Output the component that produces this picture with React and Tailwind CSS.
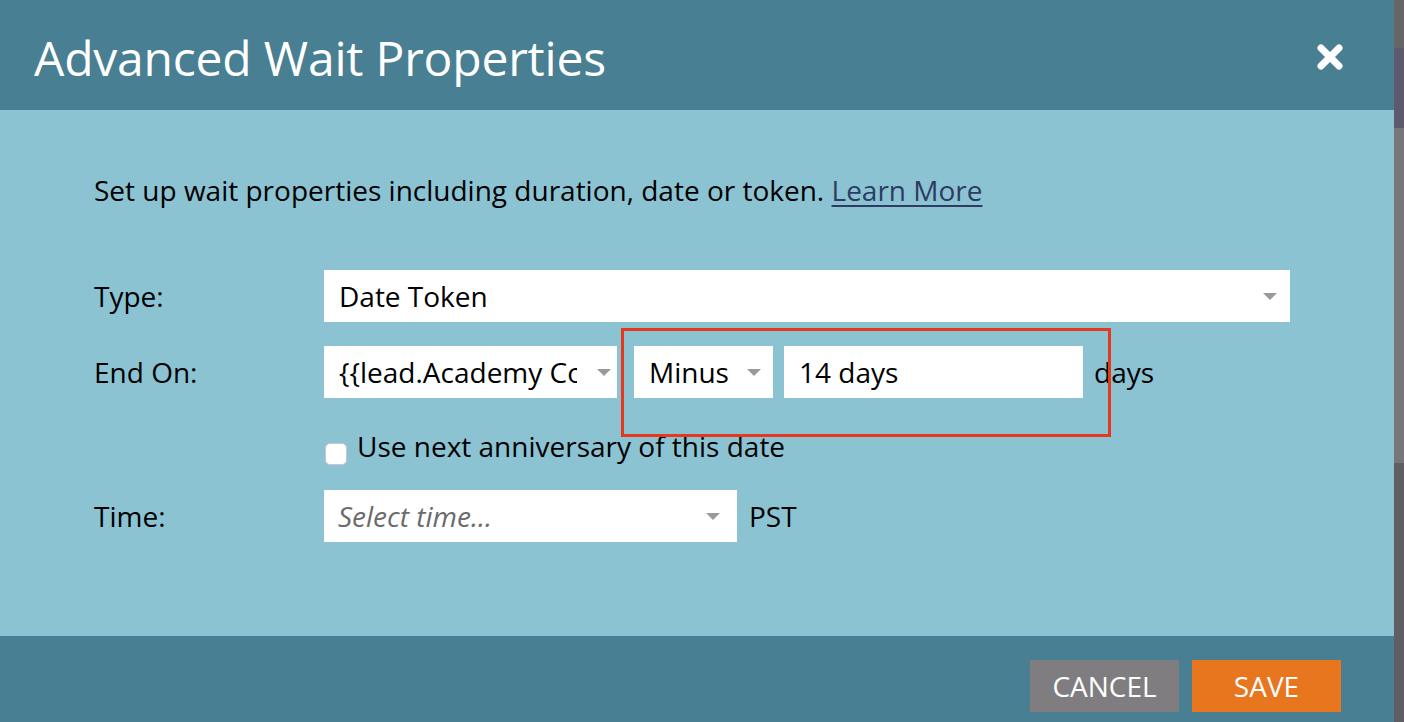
import React from "react";

const font = { fontFamily: '"Open Sans", "Noto Sans", sans-serif' };

function Arrow() {
  return (
    <svg width="16" height="9" viewBox="0 0 16 9" className="shrink-0">
      <path d="M1 1 L15 1 L8 8 Z" fill="#9a9a9a" />
    </svg>
  );
}

export default function App() {
  return (
    <div
      className="w-[1404px] h-[722px] flex overflow-hidden text-black"
      style={font}
    >
      <div className="w-[1394px] h-[722px] flex flex-col">
        {/* Header */}
        <div className="h-[110px] bg-[#487f92] flex items-center justify-between pl-[34px] pr-[50px]">
          <div className="text-white text-[48px] leading-none pt-[6px] tracking-[-0.2px]">
            Advanced Wait Properties
          </div>
          <svg width="28" height="28" viewBox="0 0 28 28" className="mt-[4px]">
            <path
              d="M5 5 L23 23 M23 5 L5 23"
              stroke="#ffffff"
              strokeWidth="7"
              strokeLinecap="round"
            />
          </svg>
        </div>

        {/* Body */}
        <div className="h-[526px] bg-[#8bc3d3] relative pl-[94px] pt-[62px]">
          <div className="text-[28px] leading-[36px]">
            Set up wait properties including duration, date or token.{" "}
            <span className="text-[#2e3b62] underline underline-offset-[4px] decoration-[2px]">
              Learn More
            </span>
          </div>

          <div className="flex flex-col mt-[62px]">
            {/* Type */}
            <div className="flex items-center h-[52px]">
              <div className="w-[230px] text-[28px]">Type:</div>
              <div className="w-[966px] h-[52px] bg-white flex items-center justify-between pl-[15px] pr-[12px]">
                <span className="text-[28px]">Date Token</span>
                <Arrow />
              </div>
            </div>

            {/* End On */}
            <div className="flex items-center h-[52px] mt-[24px]">
              <div className="w-[230px] text-[28px]">End On:</div>
              <div className="w-[293px] h-[52px] bg-white flex items-center justify-between pl-[15px] pr-[5px]">
                <span className="text-[28px] w-[238px] overflow-hidden whitespace-nowrap">
                  {"{{lead.Academy Completed Date}}"}
                </span>
                <Arrow />
              </div>
              <div className="w-[139px] h-[52px] bg-white flex items-center justify-between pl-[15px] pr-[11px] ml-[17px]">
                <span className="text-[28px]">Minus</span>
                <Arrow />
              </div>
              <div className="w-[299px] h-[52px] bg-white flex items-center pl-[15px] ml-[11px]">
                <span className="text-[28px]">14 days</span>
              </div>
              <div className="text-[28px] ml-[11px]">days</div>
            </div>

            {/* Checkbox */}
            <div className="flex items-start ml-[231px] mt-[34px] h-[28px]">
              <div className="w-[22px] h-[22px] bg-white rounded-[5px] border border-[#c8c8c8] mt-[11px] shrink-0"></div>
              <div className="text-[28px] ml-[10px] leading-none">
                Use next anniversary of this date
              </div>
            </div>

            {/* Time */}
            <div className="flex items-center h-[52px] mt-[30px]">
              <div className="w-[230px] text-[28px]">Time:</div>
              <div className="w-[413px] h-[52px] bg-white flex items-center justify-between pl-[14px] pr-[16px]">
                <span className="text-[28px] italic text-[#6b6b6b]">
                  Select time...
                </span>
                <Arrow />
              </div>
              <div className="text-[28px] ml-[12px]">PST</div>
            </div>
          </div>

          {/* Red annotation box */}
          <div className="absolute left-[621px] top-[218px] w-[490px] h-[109px] border-[3px] border-[#e5381f]"></div>
        </div>

        {/* Footer */}
        <div className="flex-1 bg-[#487f92] flex items-start justify-end pt-[24px] pr-[53px] gap-[13px]">
          <div className="w-[149px] h-[52px] bg-[#7f7d80] text-white text-[28px] flex items-center justify-center">
            CANCEL
          </div>
          <div className="w-[149px] h-[52px] bg-[#e8761e] text-white text-[28px] flex items-center justify-center">
            SAVE
          </div>
        </div>
      </div>

      {/* Right background strip */}
      <div className="w-[10px] h-[722px] flex flex-col">
        <div className="h-[48px] bg-[#666666]"></div>
        <div className="h-[80px] bg-[#5c5a6c]"></div>
        <div className="h-[335px] bg-[#77777a]"></div>
        <div className="flex-1 bg-[#5f5f63]"></div>
      </div>
    </div>
  );
}
